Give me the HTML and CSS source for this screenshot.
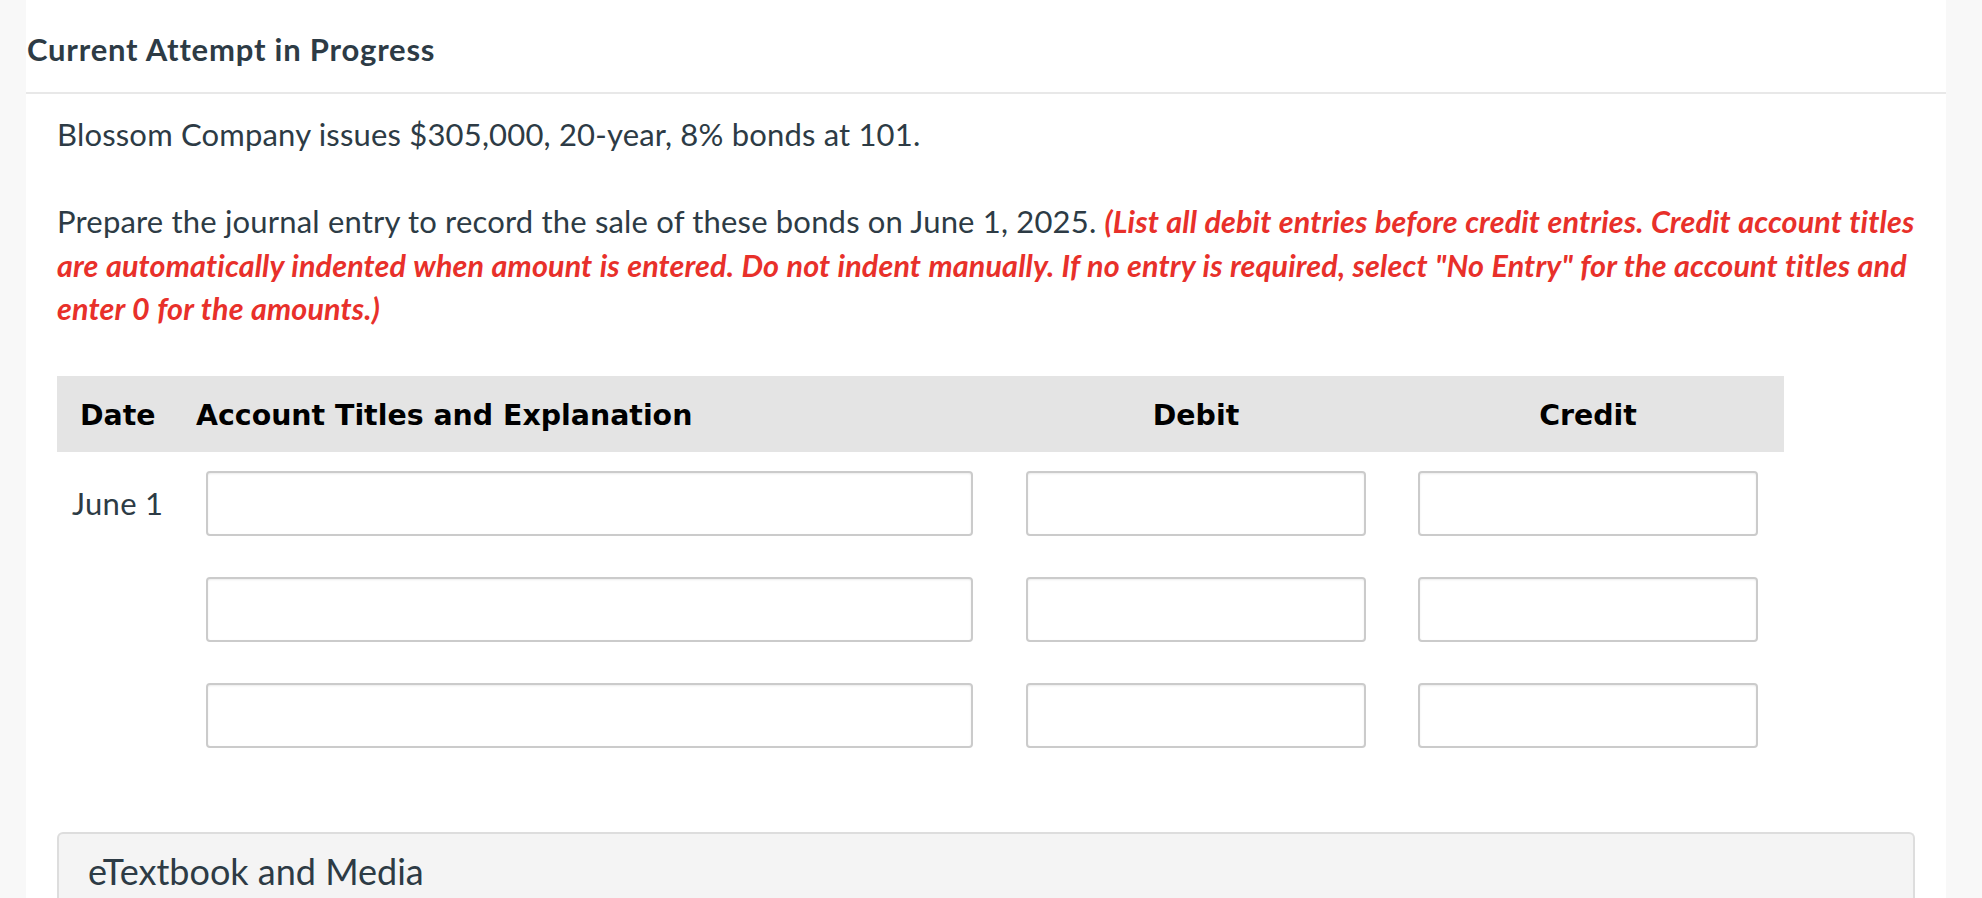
FILE: index.html
```html
<!DOCTYPE html>
<html lang="en">
<head>
<meta charset="utf-8">
<title>Current Attempt in Progress</title>
<link rel="stylesheet" href="styles.css">
</head>
<body>
<div class="page">
  <div class="attempt-header">Current Attempt in Progress</div>
  <div class="question">
    <p class="lead">Blossom Company issues $305,000, 20-year, 8% bonds at 101.</p>
    <p class="instructions">Prepare the journal entry to record the sale of these bonds on June 1, 2025. <em class="note">(List all debit entries before credit entries. Credit account titles are automatically indented when amount is entered. Do not indent manually. If no entry is required, select "No Entry" for the account titles and enter 0 for the amounts.)</em></p>

    <div class="journal">
      <div class="jhead">
        <div class="hcell hdate">Date</div>
        <div class="hcell hacct">Account Titles and Explanation</div>
        <div class="hcell hnum">Debit</div>
        <div class="hcell hnum">Credit</div>
      </div>
      <div class="jrow">
        <div class="cdate">June 1</div>
        <div class="cacct"><input class="field" type="text"></div>
        <div class="cnum"><input class="field" type="text"></div>
        <div class="cnum"><input class="field" type="text"></div>
      </div>
      <div class="jrow">
        <div class="cdate"></div>
        <div class="cacct"><input class="field" type="text"></div>
        <div class="cnum"><input class="field" type="text"></div>
        <div class="cnum"><input class="field" type="text"></div>
      </div>
      <div class="jrow">
        <div class="cdate"></div>
        <div class="cacct"><input class="field" type="text"></div>
        <div class="cnum"><input class="field" type="text"></div>
        <div class="cnum"><input class="field" type="text"></div>
      </div>
    </div>

    <div class="media">
      <div class="media-title">eTextbook and Media</div>
    </div>
  </div>
</div>
</body>
</html>
```

FILE: styles.css
```css
html, body {
  margin: 0;
  padding: 0;
}
body {
  background: #f8f8f8;
  font-family: "Lato", "Open Sans", sans-serif;
  color: #2d3b45;
  height: 898px;
  overflow: hidden;
}
.page {
  margin: 0 36px 0 26px;
  background: #ffffff;
  min-height: 898px;
}
.attempt-header {
  font-weight: 700;
  font-size: 31px;
  letter-spacing: 0.8px;
  line-height: 40px;
  padding: 29px 0 23px 1px;
  border-bottom: 2px solid #e8e8e8;
}
.question {
  padding: 19px 31px 0 31px;
}
.question p {
  margin: 0;
  font-size: 31px;
  letter-spacing: 0.18px;
  line-height: 43.5px;
}
.lead {
  margin-bottom: 43.5px !important;
}
.note {
  color: #e8302a;
  font-weight: 700;
  font-style: italic;
  font-size: 30.5px;
  letter-spacing: 0.14px;
  word-spacing: 0.5px;
}
.journal {
  margin-top: 45px;
  width: 1727px;
}
.jhead {
  display: grid;
  grid-template-columns: 123px 820px 392px 392px;
  background: #e4e4e4;
  height: 76px;
  align-items: center;
}
.hcell {
  font-family: "DejaVu Sans", Verdana, sans-serif;
  font-weight: 700;
  font-size: 28.4px;
  color: #000;
  padding-top: 4px;
}
.hdate { padding-left: 23px; }
.hacct { padding-left: 16px; }
.hnum { text-align: center; }
.jrow {
  display: grid;
  grid-template-columns: 123px 820px 392px 392px;
  align-items: center;
  padding: 19px 0 22px 0;
}
.cdate {
  padding-left: 15px;
  font-size: 31px;
  letter-spacing: 0.3px;
}
.cacct { padding: 0 27px 0 26px; }
.cnum { padding: 0 26px; }
.field {
  display: block;
  box-sizing: border-box;
  width: 100%;
  height: 65px;
  margin: 0;
  border: 2px solid #cbcbcb;
  border-radius: 4px;
  background: #fff;
  box-shadow: inset 0 1px 2px rgba(0,0,0,0.08);
  font-size: 28px;
  font-family: "Lato", sans-serif;
}
.media {
  margin-top: 62px;
  background: #f4f4f4;
  border: 2px solid #dddddd;
  border-bottom: none;
  border-radius: 6px 6px 0 0;
  height: 80px;
  padding: 16px 0 0 29px;
}
.media-title {
  font-size: 36px;
  line-height: 43px;
}
```
